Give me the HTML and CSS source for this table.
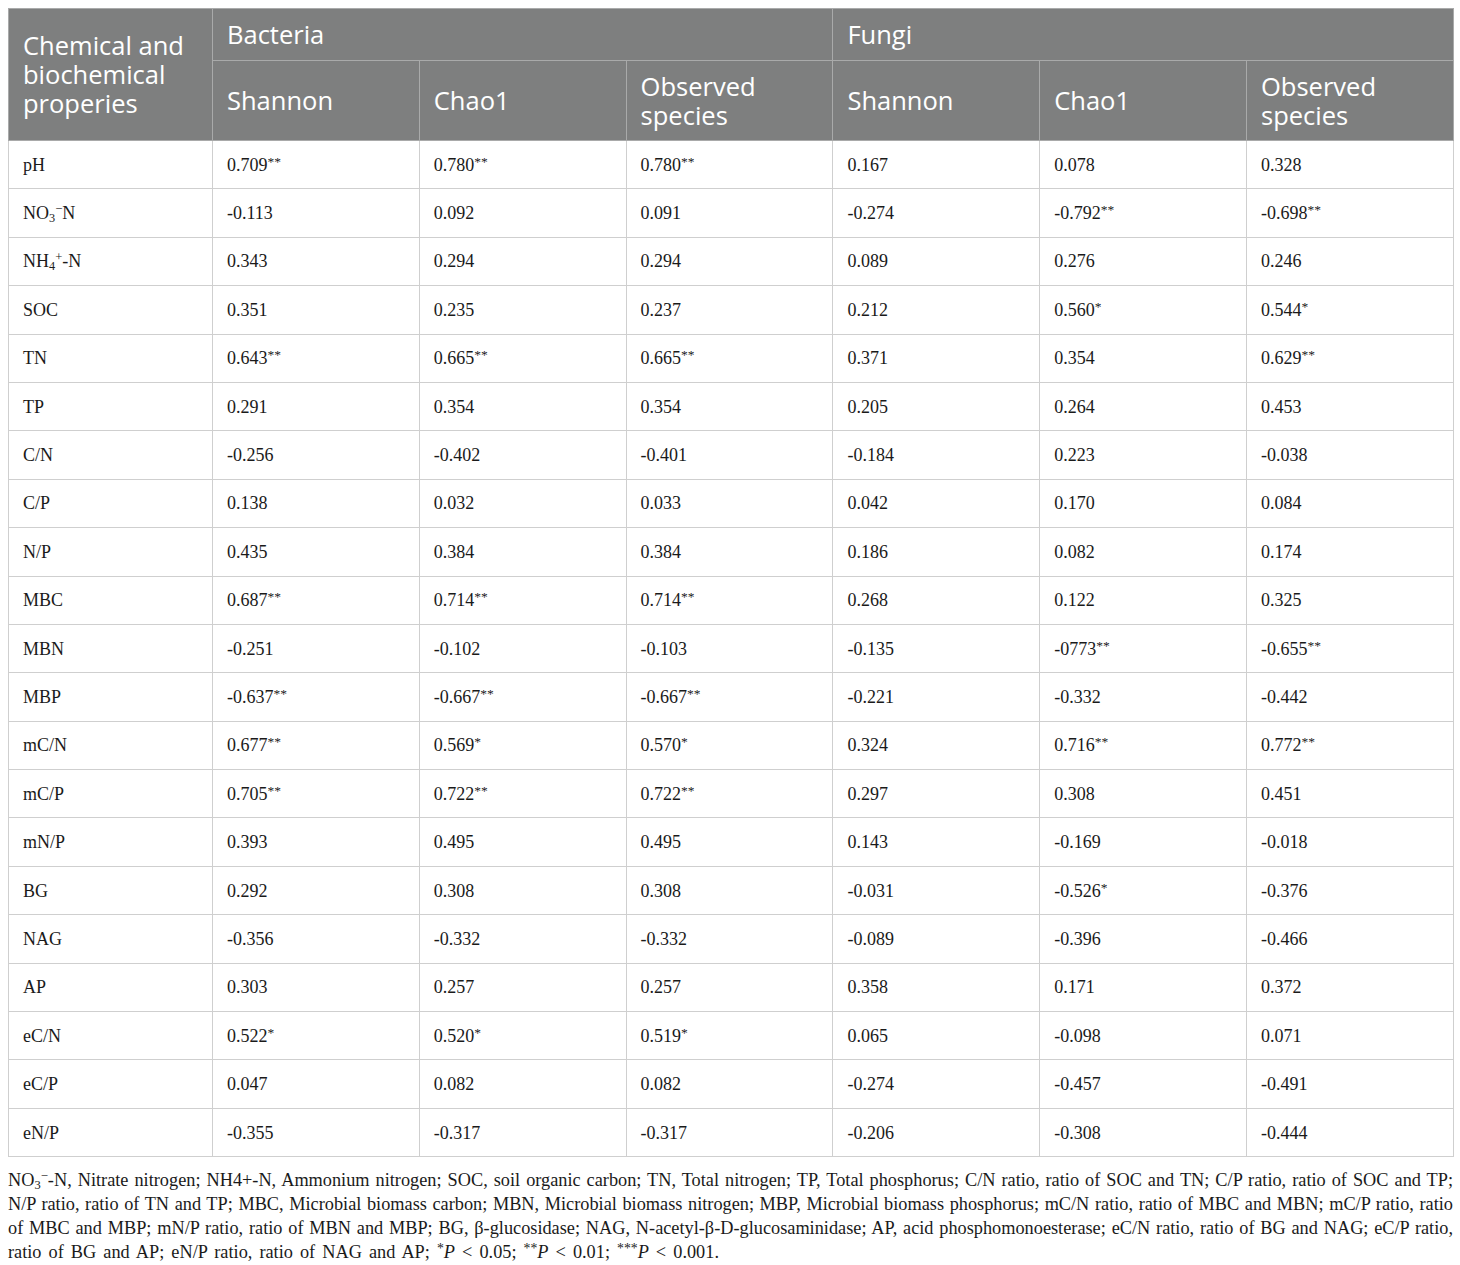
FILE: index.html
```html
<!DOCTYPE html>
<html>
<head>
<meta charset="utf-8">
<link rel="stylesheet" href="styles.css">
</head>
<body>
<div class="wrap">
<table class="data">
<colgroup>
<col class="c-first"><col class="c"><col class="c"><col class="c"><col class="c"><col class="c"><col class="c">
</colgroup>
<thead>
<tr class="h1">
<th rowspan="2" class="prop">Chemical and biochemical properies</th>
<th colspan="3">Bacteria</th>
<th colspan="3">Fungi</th>
</tr>
<tr class="h2">
<th>Shannon</th><th>Chao1</th><th>Observed species</th>
<th>Shannon</th><th>Chao1</th><th>Observed species</th>
</tr>
</thead>
<tbody>
<tr><td>pH</td><td>0.709<sup>**</sup></td><td>0.780<sup>**</sup></td><td>0.780<sup>**</sup></td><td>0.167</td><td>0.078</td><td>0.328</td></tr>
<tr><td>NO<sub>3</sub><sup class="ion">−</sup>N</td><td>-0.113</td><td>0.092</td><td>0.091</td><td>-0.274</td><td>-0.792<sup>**</sup></td><td>-0.698<sup>**</sup></td></tr>
<tr><td>NH<sub>4</sub><sup class="ion">+</sup>-N</td><td>0.343</td><td>0.294</td><td>0.294</td><td>0.089</td><td>0.276</td><td>0.246</td></tr>
<tr><td>SOC</td><td>0.351</td><td>0.235</td><td>0.237</td><td>0.212</td><td>0.560<sup>*</sup></td><td>0.544<sup>*</sup></td></tr>
<tr><td>TN</td><td>0.643<sup>**</sup></td><td>0.665<sup>**</sup></td><td>0.665<sup>**</sup></td><td>0.371</td><td>0.354</td><td>0.629<sup>**</sup></td></tr>
<tr><td>TP</td><td>0.291</td><td>0.354</td><td>0.354</td><td>0.205</td><td>0.264</td><td>0.453</td></tr>
<tr><td>C/N</td><td>-0.256</td><td>-0.402</td><td>-0.401</td><td>-0.184</td><td>0.223</td><td>-0.038</td></tr>
<tr><td>C/P</td><td>0.138</td><td>0.032</td><td>0.033</td><td>0.042</td><td>0.170</td><td>0.084</td></tr>
<tr><td>N/P</td><td>0.435</td><td>0.384</td><td>0.384</td><td>0.186</td><td>0.082</td><td>0.174</td></tr>
<tr><td>MBC</td><td>0.687<sup>**</sup></td><td>0.714<sup>**</sup></td><td>0.714<sup>**</sup></td><td>0.268</td><td>0.122</td><td>0.325</td></tr>
<tr><td>MBN</td><td>-0.251</td><td>-0.102</td><td>-0.103</td><td>-0.135</td><td>-0773<sup>**</sup></td><td>-0.655<sup>**</sup></td></tr>
<tr><td>MBP</td><td>-0.637<sup>**</sup></td><td>-0.667<sup>**</sup></td><td>-0.667<sup>**</sup></td><td>-0.221</td><td>-0.332</td><td>-0.442</td></tr>
<tr><td>mC/N</td><td>0.677<sup>**</sup></td><td>0.569<sup>*</sup></td><td>0.570<sup>*</sup></td><td>0.324</td><td>0.716<sup>**</sup></td><td>0.772<sup>**</sup></td></tr>
<tr><td>mC/P</td><td>0.705<sup>**</sup></td><td>0.722<sup>**</sup></td><td>0.722<sup>**</sup></td><td>0.297</td><td>0.308</td><td>0.451</td></tr>
<tr><td>mN/P</td><td>0.393</td><td>0.495</td><td>0.495</td><td>0.143</td><td>-0.169</td><td>-0.018</td></tr>
<tr><td>BG</td><td>0.292</td><td>0.308</td><td>0.308</td><td>-0.031</td><td>-0.526<sup>*</sup></td><td>-0.376</td></tr>
<tr><td>NAG</td><td>-0.356</td><td>-0.332</td><td>-0.332</td><td>-0.089</td><td>-0.396</td><td>-0.466</td></tr>
<tr><td>AP</td><td>0.303</td><td>0.257</td><td>0.257</td><td>0.358</td><td>0.171</td><td>0.372</td></tr>
<tr><td>eC/N</td><td>0.522<sup>*</sup></td><td>0.520<sup>*</sup></td><td>0.519<sup>*</sup></td><td>0.065</td><td>-0.098</td><td>0.071</td></tr>
<tr><td>eC/P</td><td>0.047</td><td>0.082</td><td>0.082</td><td>-0.274</td><td>-0.457</td><td>-0.491</td></tr>
<tr><td>eN/P</td><td>-0.355</td><td>-0.317</td><td>-0.317</td><td>-0.206</td><td>-0.308</td><td>-0.444</td></tr>
</tbody>
</table>
<div class="notes">
<p class="line">NO<sub>3</sub><sup class="ion">−</sup>-N, Nitrate nitrogen; NH4+-N, Ammonium nitrogen; SOC, soil organic carbon; TN, Total nitrogen; TP, Total phosphorus; C/N ratio, ratio of SOC and TN; C/P ratio, ratio of SOC and TP;</p>
<p class="line">N/P ratio, ratio of TN and TP; MBC, Microbial biomass carbon; MBN, Microbial biomass nitrogen; MBP, Microbial biomass phosphorus; mC/N ratio, ratio of MBC and MBN; mC/P ratio, ratio</p>
<p class="line">of MBC and MBP; mN/P ratio, ratio of MBN and MBP; BG, β-glucosidase; NAG, N-acetyl-β-D-glucosaminidase; AP, acid phosphomonoesterase; eC/N ratio, ratio of BG and NAG; eC/P ratio,</p>
<p class="line last">ratio of BG and AP; eN/P ratio, ratio of NAG and AP; <sup>*</sup><i>P</i> &lt; 0.05; <sup>**</sup><i>P</i> &lt; 0.01; <sup>***</sup><i>P</i> &lt; 0.001.</p>
</div>
</div>
</body>
</html>
```

FILE: styles.css
```css
html, body {
  margin: 0;
  padding: 0;
  background: #ffffff;
}

.wrap {
  padding: 8px 8px 0 8px;
}

.data {
  width: 1445px;
  border-collapse: collapse;
  table-layout: fixed;
  font-family: "Liberation Serif", "Times New Roman", serif;
  font-size: 18px;
  color: #1a1a1a;
}

.c-first { width: 204px; }
.c { width: 206.8px; }

.data th {
  background: #7e7f7f;
  color: #ffffff;
  font-family: "Open Sans", "Noto Sans", sans-serif;
  font-weight: 400;
  font-size: 25.5px;
  line-height: 29px;
  text-align: left;
  vertical-align: middle;
  padding: 0 14px;
  border: 1px solid #a9aaaa;
}

.h1 { height: 52px; }
.h2 { height: 80px; }

.data th.prop {
  vertical-align: middle;
}

.data td {
  border: 1px solid #cfcfcf;
  padding: 0 14px;
  height: 48.4px;
  line-height: 20px;
  vertical-align: middle;
  box-sizing: border-box;
}

.data tbody tr { height: 48.4px; }

sup {
  font-size: 0.75em;
  vertical-align: 0.4em;
  line-height: 0;
}

sub {
  font-size: 0.68em;
  vertical-align: -0.25em;
  line-height: 0;
}

sup.ion {
  font-size: 0.7em;
  vertical-align: 0.5em;
}

.notes {
  width: 1445px;
  padding-top: 11px;
  font-family: "Liberation Serif", "Times New Roman", serif;
  font-size: 18.3px;
  color: #1a1a1a;
}

.line {
  margin: 0;
  line-height: 24px;
  text-align: justify;
  text-align-last: justify;
  white-space: nowrap;
}

.line.last {
  text-align: left;
  text-align-last: left;
  word-spacing: 2.5px;
}
```
